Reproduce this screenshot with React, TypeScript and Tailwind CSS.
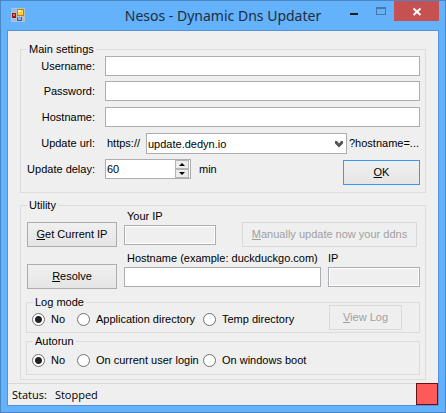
import type { InputHTMLAttributes, ButtonHTMLAttributes, ReactNode } from 'react';

function TextField({ className = '', ...rest }: InputHTMLAttributes<HTMLInputElement>) {
  return (
    <input
      className={`block h-5 border border-[#abadb3] bg-white px-0.5 outline-none read-only:bg-[#efefef] read-only:shadow-[inset_0_0_0_1px_#fff] ${className}`}
      {...rest}
    />
  );
}

type PushButtonProps = ButtonHTMLAttributes<HTMLButtonElement> & { primary?: boolean };

function PushButton({ className = '', primary = false, ...rest }: PushButtonProps) {
  const border = primary ? 'border-[#3399ff]' : 'border-[#acacac]';
  return (
    <button
      type="button"
      className={`h-[25px] shrink-0 border bg-linear-to-b from-[#f0f0f0] to-[#e5e5e5] text-center whitespace-nowrap disabled:border-[#d9d9d9] disabled:from-[#efefef] disabled:to-[#efefef] disabled:text-[#a0a0a0] ${border} ${className}`}
      {...rest}
    />
  );
}

function Group({ title, className = '', children }: { title: string; className?: string; children: ReactNode }) {
  return (
    <fieldset className={`min-w-0 border border-[#dcdcdc] ${className}`}>
      <legend className="ml-1.5 px-0.5 leading-[13px]">{title}</legend>
      {children}
    </fieldset>
  );
}

function Radio({ name, label, checked }: { name: string; label: string; checked?: boolean }) {
  return (
    <label className="flex items-center gap-1.5 whitespace-nowrap">
      <input
        type="radio"
        name={name}
        defaultChecked={checked}
        className="size-[13px] shrink-0 appearance-none rounded-full border border-[#707070] bg-white checked:bg-[radial-gradient(circle,#222_3px,#fff_4px)]"
      />
      {label}
    </label>
  );
}

function AppIcon() {
  return (
    <svg width="14" height="14" viewBox="0 0 14 14" aria-hidden="true" shapeRendering="crispEdges">
      <rect width="14" height="14" fill="#b9c0c8" />
      <rect x="0" y="1" width="5" height="3" fill="#8fbfee" />
      <rect x="0" y="11" width="5" height="2" fill="#8fbfee" />
      <rect x="12" y="10" width="1" height="3" fill="#8fbfee" />
      <rect x="6" y="1" width="7" height="7" fill="#b8860b" />
      <rect x="7" y="2" width="5" height="5" fill="#fbd23c" />
      <rect x="7" y="2" width="3" height="2" fill="#fff0a0" />
      <rect x="1" y="5" width="4" height="5" fill="#a01414" />
      <rect x="2" y="6" width="2" height="2" fill="#e86a5c" />
      <rect x="6" y="9" width="5" height="4" fill="#2f62c4" />
      <rect x="7" y="9" width="3" height="3" fill="#7fb0f5" />
    </svg>
  );
}

function TitleBar() {
  return (
    <header className="grid h-[29px] grid-cols-[1fr_auto_1fr]">
      <div className="pt-[7px] pl-1">
        <AppIcon />
      </div>
      <h1 className="font-['Noto_Sans','Open_Sans',sans-serif] text-[14px] leading-[29px] whitespace-nowrap text-[#1e2d3c]">
        Nesos - Dynamic Dns Updater
      </h1>
      <div className="flex items-start justify-end">
        <button type="button" aria-label="Minimize" className="flex h-5 w-[31px] justify-center">
          <svg width="31" height="20" shapeRendering="crispEdges" aria-hidden="true">
            <path d="M6 12h8v2h-8z" fill="#1e1e1e" />
          </svg>
        </button>
        <button type="button" aria-label="Maximize" disabled className="-ml-1 h-5 w-[23px]">
          <svg width="23" height="20" shapeRendering="crispEdges" aria-hidden="true">
            <path d="M5 6h10v8H5zM6 8v5h8V8z" fill="#4577a8" fillRule="evenodd" />
          </svg>
        </button>
        <button type="button" aria-label="Close" className="h-5 w-[45px] bg-[#c75050]">
          <svg width="45" height="20" aria-hidden="true">
            <path d="M19.500 7.500l7 6.500M26.500 7.500l-7 6.500" stroke="#fff" strokeWidth="2" />
          </svg>
        </button>
      </div>
    </header>
  );
}

function MainSettings() {
  return (
    <Group title="Main settings">
      <div className="grid grid-cols-[84px_1fr] grid-rows-[25px_26px_26px_26px_26px] pr-[5px] pb-[7px]">
        <label htmlFor="username" className="pr-2.5 text-right leading-5">Username:</label>
        <TextField id="username" className="w-full" />
        <label htmlFor="password" className="pr-2.5 text-right leading-5">Password:</label>
        <TextField id="password" type="password" className="w-full" />
        <label htmlFor="hostname" className="pr-2.5 text-right leading-5">Hostname:</label>
        <TextField id="hostname" className="w-full" />

        <label htmlFor="url" className="pr-2.5 text-right leading-5">Update url:</label>
        <div className="flex leading-5">
          <span className="w-[41px] shrink-0 pl-0.5">https://</span>
          <div className="relative h-[21px] min-w-0 flex-1">
            <select id="url" className="block h-full w-full appearance-none border border-[#abadb3] bg-white px-px">
              <option>update.dedyn.io</option>
            </select>
            <svg className="pointer-events-none absolute top-2 right-1" width="8" height="7" aria-hidden="true">
              <path d="M0 0h2l2 2.500L6 0h2v2.500L4 6.500L0 2.500z" fill="#555" />
            </svg>
          </div>
          <span className="w-[73px] shrink-0 pl-0.5 whitespace-nowrap">?hostname=...</span>
        </div>

        <label htmlFor="delay" className="pr-2.5 text-right leading-5">Update delay:</label>
        <div className="flex">
          <div className="flex h-5 w-[86px] border border-[#abadb3] bg-white pr-px">
            <input id="delay" defaultValue="60" className="min-w-0 flex-1 bg-transparent px-px outline-none" />
            <div className="flex w-3.5 flex-col">
              <button type="button" aria-label="Increase" className="flex flex-1 items-center justify-center border border-[#b4b4b4] bg-[#ececec]">
                <svg width="6" height="3" aria-hidden="true"><path d="M0 3L3 0L6 3z" /></svg>
              </button>
              <button type="button" aria-label="Decrease" className="flex flex-1 items-center justify-center border border-[#b4b4b4] bg-[#ececec]">
                <svg width="6" height="3" aria-hidden="true"><path d="M0 0L3 3L6 0z" /></svg>
              </button>
            </div>
          </div>
          <span className="pl-2 leading-5">min</span>
          <PushButton primary className="ml-auto w-[77px] self-end"><u>O</u>K</PushButton>
        </div>
      </div>
    </Group>
  );
}

function Utility() {
  return (
    <Group title="Utility" className="pb-1">
      <div className="-mt-0.5 flex items-end gap-[7px] pr-2 pl-1.5">
        <PushButton className="w-[90px]"><u>G</u>et Current IP</PushButton>
        <div className="pb-0.5">
          <label htmlFor="your-ip" className="mb-0.5 block pl-[3px] leading-[13px]">Your IP</label>
          <TextField id="your-ip" readOnly className="w-[92px]" />
        </div>
        <PushButton disabled className="ml-auto w-[175px]"><u>M</u>anually update now your ddns</PushButton>
      </div>
      <div className="mt-[5px] flex items-end gap-[7px] pr-[5px] pl-1.5">
        <PushButton className="w-[90px]"><u>R</u>esolve</PushButton>
        <div className="min-w-0 flex-1 pb-0.5">
          <label htmlFor="lookup" className="mb-0.5 block pl-[3px] leading-[13px] whitespace-nowrap">
            Hostname (example: duckduckgo.com)
          </label>
          <TextField id="lookup" className="w-full" />
        </div>
        <div className="pb-0.5">
          <label htmlFor="lookup-ip" className="mb-0.5 block leading-[13px]">IP</label>
          <TextField id="lookup-ip" readOnly className="w-[92px]" />
        </div>
      </div>

      <Group title="Log mode" className="mx-[5px] mt-[7px]">
        <div className="flex items-start justify-between pr-[17px] pl-[5px]">
          <div className="grid h-[23px] grid-cols-[45px_126px_auto] pb-0.5">
            <Radio name="log" label="No" checked />
            <Radio name="log" label="Application directory" />
            <Radio name="log" label="Temp directory" />
          </div>
          <PushButton disabled className="-mt-1 w-[73px]"><u>V</u>iew Log</PushButton>
        </div>
      </Group>
      <Group title="Autorun" className="mx-[5px] mt-0.5">
        <div className="grid h-[26px] grid-cols-[45px_126px_auto] justify-start pb-0.5 pl-[5px]">
          <Radio name="autorun" label="No" checked />
          <Radio name="autorun" label="On current user login" />
          <Radio name="autorun" label="On windows boot" />
        </div>
      </Group>
    </Group>
  );
}

export default function App() {
  return (
    <div className="border border-[#4a86c2] bg-[#64b1fc] px-1.5 pb-1.5 font-['Liberation_Sans',Arial,sans-serif] text-[11px] text-black">
      <TitleBar />
      <div className="border border-[#4f93d8] bg-[#efefef]">
        <main className="flex flex-col gap-1.5 px-3 pt-3 pb-[3px]">
          <MainSettings />
          <Utility />
        </main>
        <footer className="flex h-[22px] justify-between border-t border-[#d7d7d7] font-['Open_Sans','Noto_Sans',sans-serif]">
          <p className="pl-1 leading-[22px]">
            Status:<span className="pl-2">Stopped</span>
          </p>
          <div className="-mt-px size-[22px] border border-[#6b0f0f] bg-[#ff5a5a]" />
        </footer>
      </div>
    </div>
  );
}
